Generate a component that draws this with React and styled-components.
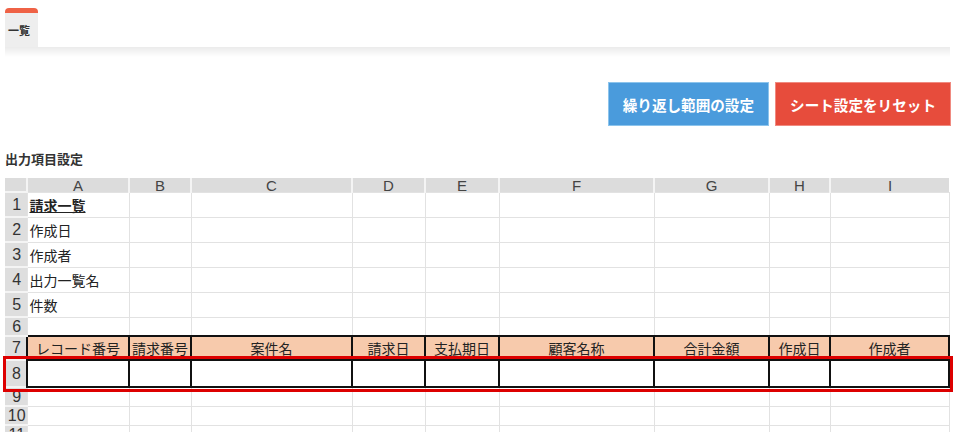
import React from 'react';
import styled, { createGlobalStyle } from 'styled-components';

const GlobalStyle = createGlobalStyle`
  body {
    margin: 0;
    background: #fff;
    font-family: "Liberation Sans", "Noto Sans CJK JP", sans-serif;
    color: #222;
  }
`

const Page = styled.div`
  padding: 8px 9px 0 5px;
  width: 946px;
`

const TabBar = styled.div`
  display: flex;
  height: 39px;
`

const Tab = styled.div`
  width: 33px;
  box-sizing: border-box;
  background: #eeeeee;
  border-top: 5px solid #ef6246;
  border-radius: 4px 4px 0 0;
  font-size: 11px;
  font-weight: bold;
  color: #333;
  padding: 9px 0 0 3px;
`

const TabShadow = styled.div`
  height: 10px;
  width: 945px;
  background: linear-gradient(#ebebeb, #ffffff);
`

const Toolbar = styled.div`
  display: flex;
  justify-content: flex-end;
  gap: 6px;
  margin-top: 25px;
`

const Button = styled.button`
  height: 44px;
  padding: 0 ${p => p.$pad}px;
  border: 1px solid ${p => p.$edge};
  background: ${p => p.$bg};
  color: #fff;
  font-family: "Noto Sans CJK JP", sans-serif;
  font-size: 14.6px;
  font-weight: bold;
  cursor: pointer;
`

const SectionTitle = styled.div`
  margin-top: 24px;
  font-size: 13px;
  line-height: 18px;
  font-weight: bold;
  color: #333;
  font-family: "Noto Sans CJK JP", sans-serif;
`

const SheetWrap = styled.div`
  position: relative;
  margin-top: 10px;
  width: 944px;
`

const Sheet = styled.table`
  border-collapse: collapse;
  table-layout: fixed;
  width: 944px;
`

const ColHead = styled.th`
  height: 13px;
  padding: 0;
  background: #dcdcdc;
  border-left: 2px solid #f4f4f4;
  font-weight: normal;
  font-size: 15px;
  line-height: 13px;
  color: #444;
  text-align: center;
  vertical-align: bottom;
  &:first-child { border-left: none; }
`

const RowNum = styled.td`
  padding: 0 0 0 2px;
  background: #dedede;
  border-top: 2px solid #f4f4f4;
  font-size: 16px;
  color: #333;
  text-align: center;
  line-height: 1;
  overflow: hidden;
`

const Row = styled.tr`
  height: ${p => p.$h}px;
`

const Cell = styled.td`
  padding: 0 2px;
  border: 1px solid #e2e2e2;
  font-family: "Noto Sans CJK JP", sans-serif;
  font-size: 14px;
  color: #222;
  white-space: nowrap;
  overflow: hidden;
  font-weight: ${p => (p.$title ? 'bold' : 'normal')};
  text-decoration: ${p => (p.$title ? 'underline' : 'none')};
`

const HeadCell = styled.td`
  padding: 0;
  border: 2px solid #111;
  background: ${p => (p.$fill ? '#f7caac' : '#fff')};
  font-family: "Noto Sans CJK JP", sans-serif;
  font-size: 14px;
  color: #222;
  text-align: center;
  white-space: nowrap;
  overflow: hidden;
`

const Highlight = styled.div`
  position: absolute;
  left: -2px;
  top: 178px;
  width: 950px;
  height: 36px;
  border: 3px solid #dd0000;
  box-sizing: border-box;
  pointer-events: none;
`

const columns = [
  { key: '', width: 22 },
  { key: 'A', width: 102 },
  { key: 'B', width: 62 },
  { key: 'C', width: 161 },
  { key: 'D', width: 73 },
  { key: 'E', width: 74 },
  { key: 'F', width: 155 },
  { key: 'G', width: 115 },
  { key: 'H', width: 61 },
  { key: 'I', width: 119 },
]

const labels = ['請求一覧', '作成日', '作成者', '出力一覧名', '件数', '']
const heights = [25, 25, 25, 25, 25, 19]
const fields = ['レコード番号', '請求番号', '案件名', '請求日', '支払期日', '顧客名称', '合計金額', '作成日', '作成者']

function App() {
  const blanks = columns.slice(2)

  return (
    <Page>
      <GlobalStyle />
      <TabBar>
        <Tab>一覧</Tab>
      </TabBar>
      <TabShadow />
      <Toolbar>
        <Button $bg="#4a9bdc" $edge="#8cc4ec" $pad={14}>繰り返し範囲の設定</Button>
        <Button $bg="#e74c3c" $edge="#f08a80" $pad={14}>シート設定をリセット</Button>
      </Toolbar>
      <SectionTitle>出力項目設定</SectionTitle>
      <SheetWrap>
        <Sheet>
          <colgroup>
            {columns.map(c => <col key={c.key || 'n'} style={{ width: c.width }} />)}
          </colgroup>
          <thead>
            <tr>
              {columns.map(c => <ColHead key={c.key || 'n'}>{c.key}</ColHead>)}
            </tr>
          </thead>
          <tbody>
            {labels.map((label, i) => (
              <Row key={i} $h={heights[i]}>
                <RowNum>{i + 1}</RowNum>
                <Cell $title={i === 0}>{label}</Cell>
                {blanks.map(c => <Cell key={c.key} />)}
              </Row>
            ))}
            <Row $h={24}>
              <RowNum>7</RowNum>
              {fields.map(f => <HeadCell key={f} $fill>{f}</HeadCell>)}
            </Row>
            <Row $h={27}>
              <RowNum>8</RowNum>
              {fields.map(f => <HeadCell key={f} />)}
            </Row>
            {[9, 10, 11].map(n => (
              <Row key={n} $h={19}>
                <RowNum>{n}</RowNum>
                {columns.slice(1).map(c => <Cell key={c.key} />)}
              </Row>
            ))}
          </tbody>
        </Sheet>
        <Highlight />
      </SheetWrap>
    </Page>
  );
}

export default App;
